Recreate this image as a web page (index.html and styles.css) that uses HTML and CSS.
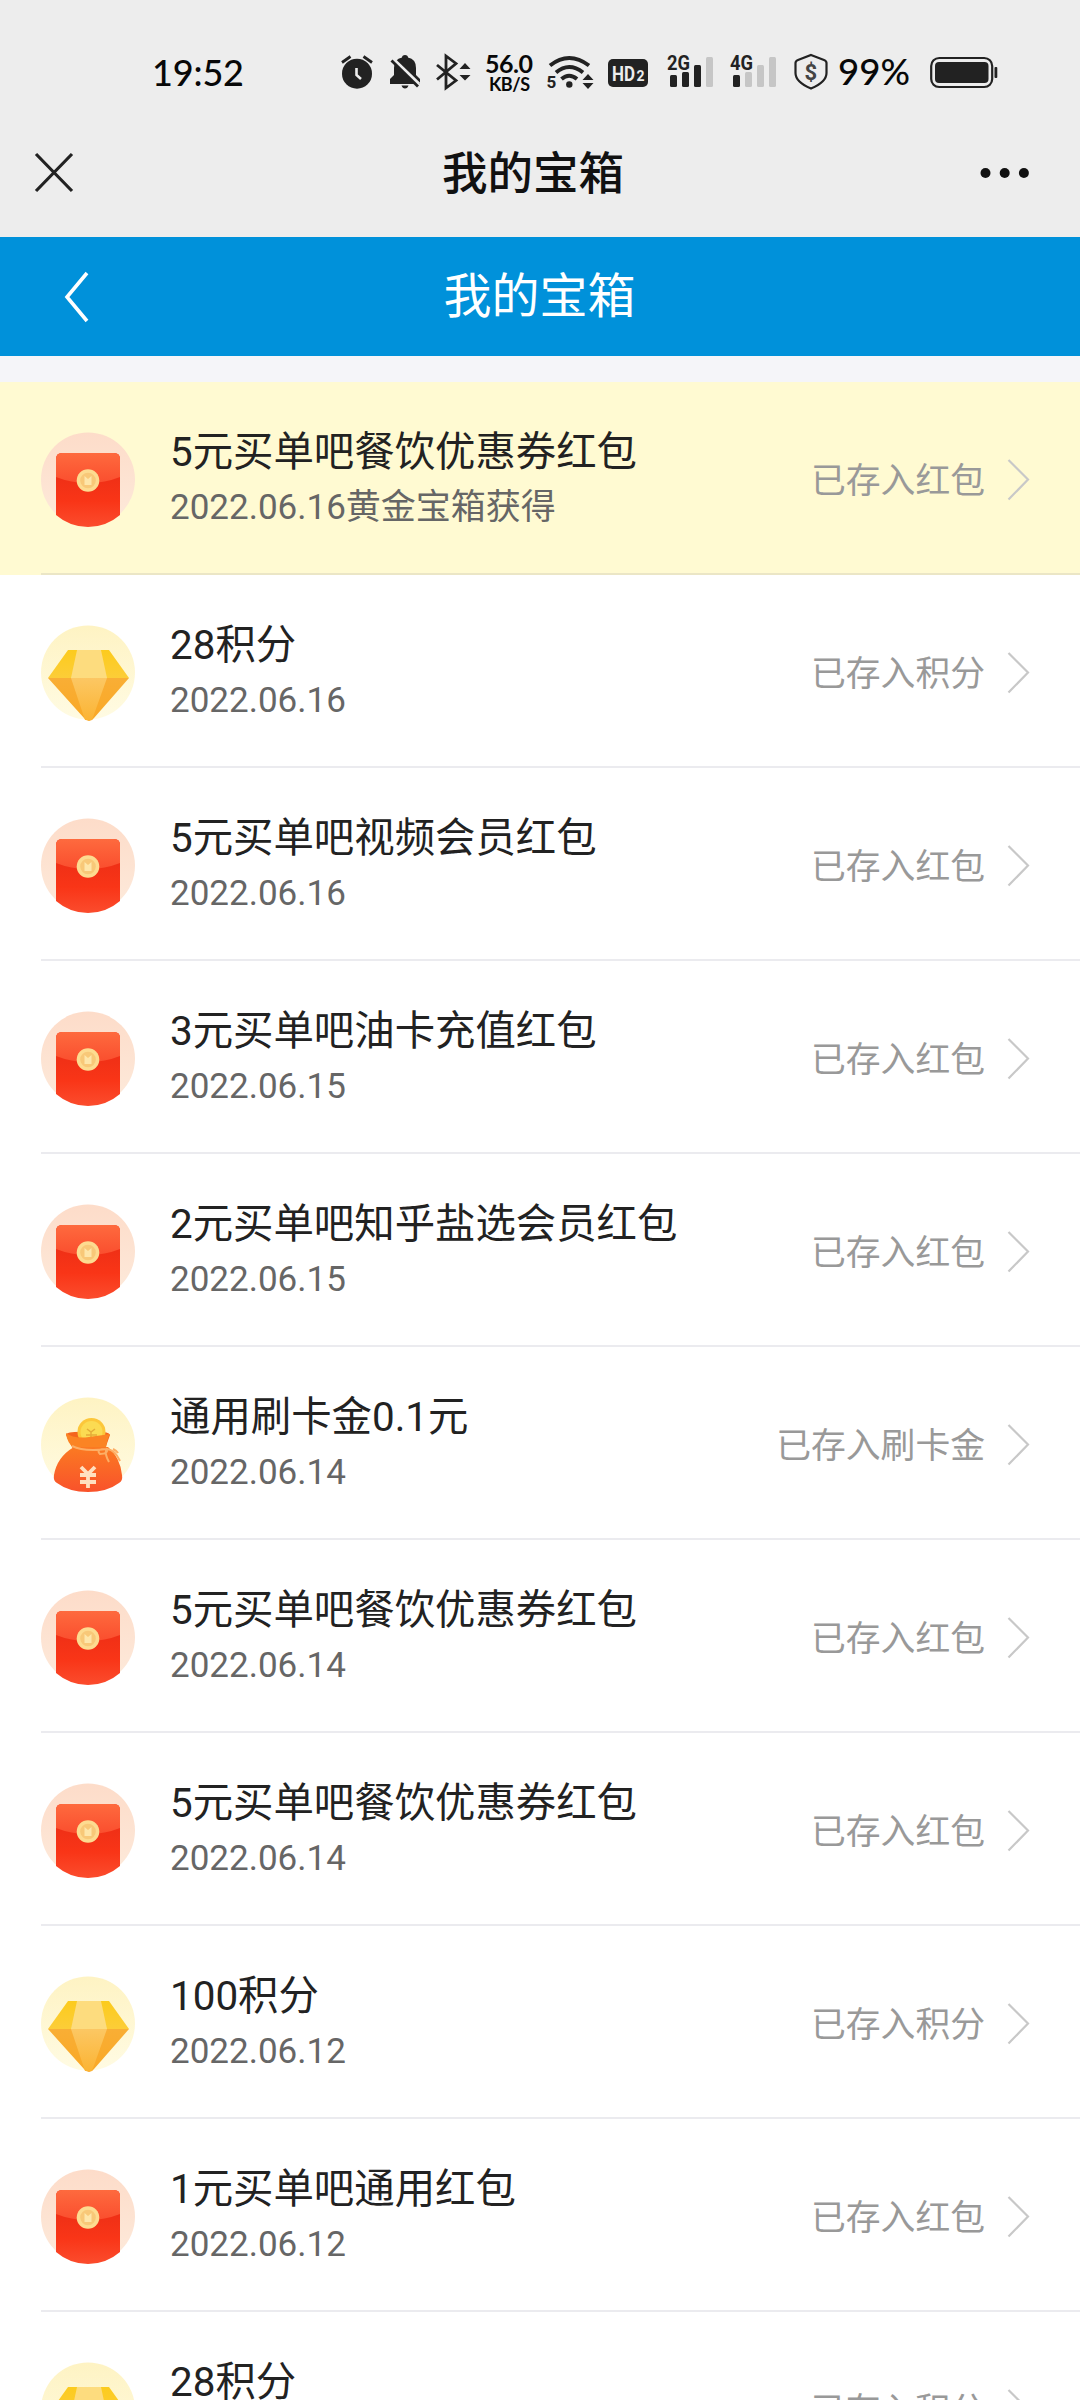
FILE: index.html
```html
<!DOCTYPE html>
<html lang="zh-CN">
<head>
<meta charset="utf-8">
<title>我的宝箱</title>
<link rel="stylesheet" href="styles.css">
</head>
<body>
<svg class="defs" aria-hidden="true">
  <defs>
    <linearGradient id="flap" x1="0" y1="0" x2="0" y2="1"><stop offset="0" stop-color="#fe6a3e"/><stop offset="1" stop-color="#fa4e2e"/></linearGradient>
    <linearGradient id="packet" x1="0" y1="0" x2="0" y2="1"><stop offset=".35" stop-color="#f03016"/><stop offset=".65" stop-color="#f93517"/><stop offset="1" stop-color="#fb4c2d"/></linearGradient>
    <linearGradient id="peach" x1="0" y1="0" x2="0" y2="1"><stop offset="0" stop-color="#fddcc9"/><stop offset="1" stop-color="#fdeadb"/></linearGradient>
    <linearGradient id="cream" x1="0" y1="0" x2="0" y2="1"><stop offset="0" stop-color="#fef3c3"/><stop offset="1" stop-color="#fffbe3"/></linearGradient>
    <linearGradient id="gemTop" x1="0" y1="0" x2="0" y2="1"><stop offset="0" stop-color="#fccb1d"/><stop offset="1" stop-color="#fccd38"/></linearGradient>
    <linearGradient id="gemLow" x1="0" y1="0" x2="0" y2="1"><stop offset="0" stop-color="#f9ae35"/><stop offset="1" stop-color="#f9a825"/></linearGradient>
    <linearGradient id="gemMid" x1="0" y1="0" x2="0" y2="1"><stop offset="0" stop-color="#fcc763"/><stop offset="1" stop-color="#fbb434"/></linearGradient>
    <linearGradient id="bag" x1="0" y1="0" x2="0" y2="1"><stop offset="0" stop-color="#fb7a22"/><stop offset="1" stop-color="#f9522b"/></linearGradient>
    <symbol id="i-packet" viewBox="0 0 96 96">
      <circle cx="47" cy="47.500" r="47" fill="url(#peach)"/>
      <path d="M15 27q0-6 6-6h52q6 0 6 6v56Q65 95 47 95T15 83z" fill="url(#packet)"/>
      <path d="M15 27q0-6 6-6h52q6 0 6 6v18Q64 51 47 51T15 45z" fill="url(#flap)"/>
      <circle cx="47" cy="48.500" r="11.300" fill="#fddb90"/>
      <circle cx="47" cy="48.500" r="7.800" fill="#f8c878"/>
      <path d="M43.500 44l3.500 3 3.500-3v9h-7z" fill="#fee6aa"/>
    </symbol>
    <symbol id="i-gem" viewBox="0 0 96 96">
      <circle cx="47" cy="47.500" r="47" fill="url(#cream)"/>
      <path d="M27 25h41l20 28H7z" fill="url(#gemTop)"/>
      <path d="M7 53h81L53 93q-2 3-5 3t-5-3z" fill="url(#gemLow)"/>
      <path d="M36 25h24l6 28H30z" fill="#fddc7e"/>
      <path d="M30 53h36L51 95h-7z" fill="url(#gemMid)"/>
    </symbol>
    <symbol id="i-bag" viewBox="0 0 96 96">
      <circle cx="47" cy="47.500" r="47" fill="url(#cream)"/>
      <path d="M25 38q0-4 24-3 19-1 20 3l-5 14H32z" fill="#f4651e"/>
      <circle cx="50.500" cy="35" r="14" fill="#fcc73a"/>
      <circle cx="50.500" cy="35" r="11" fill="#fbdb52"/>
      <path d="M46 32l4 3 4-3M50 35v9M45 38h11" fill="none" stroke="#e5ad38" stroke-width="1.500"/>
      <path d="M25 36q8 6 23 4t21-3q-3 5-4 14H33q-7-5-8-15z" fill="#fb8423"/>
      <path d="M33 50h34q12 10 14 28 1 6-3 8-12 9-31 9t-31-9q-4-2-3-8 3-18 20-28z" fill="url(#bag)"/>
      <path d="M31 49q12 6 35 3M66 52q-12 0-7 5 8 0 7-5 8 1 13 12M65 53q-1 5 3 12M72 52q4 2 5 4" fill="none" stroke="#fdae65" stroke-width="2"/>
      <path d="M40 70l7 7 7-7M47 77v14M39 78h16M39 85h16" fill="none" stroke="#ffe0c0" stroke-width="3.800"/>
    </symbol>
    <symbol id="i-more" viewBox="0 0 24 44"><path d="M1.500 2L21 21.500 1.500 41.500" fill="none" stroke="#c8c8c8" stroke-width="2.200"/></symbol>
  </defs>
</svg>

<div class="status-bar">
  <svg class="time" width="94" height="50" viewBox="151 50 94 50"><text x="152" y="86" textLength="92">19:52</text></svg>
  <svg class="alarm" width="36" height="50" viewBox="339 50 36 50"><circle cx="357" cy="73.700" r="15"/><path d="M342 62.500l8.500-6M363.500 56.500l8.500 6" class="line w3"/><path d="M356.500 68v7l4.500 4" fill="none" stroke="#ededed" stroke-width="2.600"/></svg>
  <svg class="bell" width="32" height="50" viewBox="389 50 32 50"><path d="M390 84v-5l4-4v-7q0-9 8-10.500 0-2.500 3-2.500t3 2.500q8 1.500 8 10.500v7l4 4v5zM401.500 85.500h7q-1 3-3.500 3t-3.500-3z"/><path d="M390 56.500l29 28" stroke="#ededed" stroke-width="4" fill="none"/><path d="M391.500 60.500l26.500 26" class="line w3"/></svg>
  <svg class="bt" width="36" height="50" viewBox="435 50 36 50"><path d="M437 65l19 15.500-10 7.500V56l10 7.500-19 16" class="line w3"/><path d="M459.500 69l5.500-6 5.500 6zM459.500 75h11l-5.500 5.500z"/></svg>
  <svg class="speed" width="52" height="50" viewBox="483 50 52 50"><text class="rate" x="485" y="72.500" textLength="48">56.0</text><text class="unit" x="489" y="90.500" textLength="41">KB/S</text></svg>
  <svg class="wifi" width="50" height="50" viewBox="545 50 50 50"><path d="M550 65.500q19-15 39 0M556 72.500q13-11 27 0M561.500 79q7.500-6.500 15.500 0" class="line w4"/><circle cx="569.300" cy="84.500" r="3.200"/><text class="tiny" x="546.500" y="88" textLength="9">5</text><path d="M582.500 80l5.500-6 5.500 6zM582.500 83h11l-5.500 6z"/></svg>
  <svg class="hd" width="42" height="50" viewBox="607 50 42 50"><rect x="608" y="59" width="40" height="28" rx="5"/><text class="hd-text" x="612" y="81" textLength="23" lengthAdjust="spacingAndGlyphs">HD</text><text class="hd-sub" x="636.500" y="81" textLength="9">2</text></svg>
  <svg class="sim" width="50" height="50" viewBox="666 50 50 50"><text class="net" x="667" y="70" textLength="23" lengthAdjust="spacingAndGlyphs">2G</text><rect x="670" y="75" width="7" height="12" rx="1.500"/><rect x="682" y="72" width="7" height="15" rx="1.500"/><rect x="694" y="65" width="7" height="22" rx="1.500"/><rect class="off" x="706" y="57" width="7" height="30" rx="1.500"/></svg>
  <svg class="sim2" width="50" height="50" viewBox="729 50 50 50"><text class="net" x="730" y="70" textLength="23" lengthAdjust="spacingAndGlyphs">4G</text><rect x="733" y="75" width="7" height="12" rx="1.500"/><rect class="off" x="745" y="72" width="7" height="15" rx="1.500"/><rect class="off" x="757" y="65" width="7" height="22" rx="1.500"/><rect class="off" x="769" y="57" width="7" height="30" rx="1.500"/></svg>
  <svg class="shield" width="36" height="50" viewBox="793 50 36 50"><path d="M811 55l13 5q2.500 1 2.500 3v10q0 9-15.500 15.500Q795.500 82 795.500 73V63q0-2 2.500-3z" class="line w2"/><text class="dollar" x="804.500" y="79.500" textLength="13">$</text></svg>
  <svg class="percent" width="74" height="50" viewBox="837 50 74 50"><text x="838" y="84.500" textLength="72" lengthAdjust="spacingAndGlyphs">99%</text></svg>
  <svg class="battery" width="70" height="50" viewBox="929 50 70 50"><rect x="931.200" y="58" width="61" height="29" rx="8" class="line w2"/><rect x="935" y="62" width="53.500" height="21" rx="4"/><rect x="994.500" y="67" width="2.800" height="11" rx="1"/></svg>
</div>

<div class="nav">
  <svg class="close" width="40" height="42" viewBox="0 0 40 42"><path d="M2 2l36 37M38 2L2 39"/></svg>
  <h1>我的宝箱</h1>
  <svg class="dots" width="52" height="12" viewBox="0 0 52 12"><circle cx="6.500" cy="6" r="5"/><circle cx="25.700" cy="6" r="5"/><circle cx="44.900" cy="6" r="5"/></svg>
</div>

<div class="header">
  <svg class="back" width="26" height="52" viewBox="0 0 26 52"><path d="M23 2L3 26l20 24"/></svg>
  <h2>我的宝箱</h2>
</div>

<ul class="list">
  <li class="item new"><svg class="icon"><use href="#i-packet"/></svg><div class="body"><div class="text"><p class="name">5元买单吧餐饮优惠券红包</p><p class="date">2022.06.16黄金宝箱获得</p></div><span class="state">已存入红包</span><svg class="more"><use href="#i-more"/></svg></div></li>
  <li class="item"><svg class="icon"><use href="#i-gem"/></svg><div class="body"><div class="text"><p class="name">28积分</p><p class="date">2022.06.16</p></div><span class="state">已存入积分</span><svg class="more"><use href="#i-more"/></svg></div></li>
  <li class="item"><svg class="icon"><use href="#i-packet"/></svg><div class="body"><div class="text"><p class="name">5元买单吧视频会员红包</p><p class="date">2022.06.16</p></div><span class="state">已存入红包</span><svg class="more"><use href="#i-more"/></svg></div></li>
  <li class="item"><svg class="icon"><use href="#i-packet"/></svg><div class="body"><div class="text"><p class="name">3元买单吧油卡充值红包</p><p class="date">2022.06.15</p></div><span class="state">已存入红包</span><svg class="more"><use href="#i-more"/></svg></div></li>
  <li class="item"><svg class="icon"><use href="#i-packet"/></svg><div class="body"><div class="text"><p class="name">2元买单吧知乎盐选会员红包</p><p class="date">2022.06.15</p></div><span class="state">已存入红包</span><svg class="more"><use href="#i-more"/></svg></div></li>
  <li class="item"><svg class="icon"><use href="#i-bag"/></svg><div class="body"><div class="text"><p class="name">通用刷卡金0.1元</p><p class="date">2022.06.14</p></div><span class="state">已存入刷卡金</span><svg class="more"><use href="#i-more"/></svg></div></li>
  <li class="item"><svg class="icon"><use href="#i-packet"/></svg><div class="body"><div class="text"><p class="name">5元买单吧餐饮优惠券红包</p><p class="date">2022.06.14</p></div><span class="state">已存入红包</span><svg class="more"><use href="#i-more"/></svg></div></li>
  <li class="item"><svg class="icon"><use href="#i-packet"/></svg><div class="body"><div class="text"><p class="name">5元买单吧餐饮优惠券红包</p><p class="date">2022.06.14</p></div><span class="state">已存入红包</span><svg class="more"><use href="#i-more"/></svg></div></li>
  <li class="item"><svg class="icon"><use href="#i-gem"/></svg><div class="body"><div class="text"><p class="name">100积分</p><p class="date">2022.06.12</p></div><span class="state">已存入积分</span><svg class="more"><use href="#i-more"/></svg></div></li>
  <li class="item"><svg class="icon"><use href="#i-packet"/></svg><div class="body"><div class="text"><p class="name">1元买单吧通用红包</p><p class="date">2022.06.12</p></div><span class="state">已存入红包</span><svg class="more"><use href="#i-more"/></svg></div></li>
  <li class="item"><svg class="icon"><use href="#i-gem"/></svg><div class="body"><div class="text"><p class="name">28积分</p><p class="date">2022.06.12</p></div><span class="state">已存入积分</span><svg class="more"><use href="#i-more"/></svg></div></li>
</ul>
</body>
</html>
```
FILE: styles.css
```css
* { box-sizing: border-box; margin: 0; padding: 0; }
html, body { height: 2400px; overflow: hidden; }
body { width: 1080px; background: #f5f5f9; font-family: Roboto, "Noto Sans CJK SC", sans-serif; }
svg { display: block; flex: none; overflow: visible; }
.defs { position: absolute; width: 0; height: 0; }

.status-bar { display: flex; height: 108px; padding: 50px 0 0 151px; background: #ededed; fill: #222; }
.status-bar text { font-family: Lato, sans-serif; fill: #080808; }
.time text { font-size: 36px; font-weight: 500; }
.percent text { font-size: 36px; font-weight: 500; }
.status-bar .rate { font-size: 25px; font-weight: 700; }
.status-bar .unit { font-size: 18px; font-weight: 700; }
.status-bar .tiny { font: 700 17px Roboto, sans-serif; fill: #222; }
.status-bar .net { font: 700 21px Roboto, sans-serif; fill: #222; }
.status-bar .hd-text { font: 700 20px Roboto, sans-serif; fill: #ededed; }
.status-bar .hd-sub { font: 700 14px Roboto, sans-serif; fill: #ededed; }
.status-bar .dollar { font: 700 22px Roboto, sans-serif; fill: #444; }
.line { fill: none; stroke: #222; }
.w2 { stroke-width: 2.2; }
.w3 { stroke-width: 2.8; }
.w4 { stroke-width: 4; }
.off { fill: #c6c6c6; }
.alarm { margin-left: 94px; }
.bell { margin-left: 14px; }
.bt { margin-left: 14px; }
.speed { margin-left: 12px; }
.wifi { margin-left: 10px; }
.hd { margin-left: 12px; }
.sim { margin-left: 17px; }
.sim2 { margin-left: 13px; }
.shield { margin-left: 14px; }
.percent { margin-left: 8px; }
.battery { margin-left: 18px; }

.nav { display: flex; align-items: center; height: 129px; padding: 0 50px 0 34px; background: #ededed; }
.close path { fill: none; stroke: #222; stroke-width: 3.2; }
.nav h1 { flex: 1; padding: 5px 0 0 13px; text-align: center; font-size: 45.5px; font-weight: 500; line-height: 60px; color: #111; }
.dots { fill: #111; margin-right: -1px; }

.header { display: flex; align-items: center; height: 119px; padding: 0 91px 0 64px; background: #0091da; }
.back path { fill: none; stroke: #fff; stroke-width: 3.6; }
.header h2 { flex: 1; text-align: center; font-size: 48px; font-weight: 400; line-height: 60px; color: #fff; }

.list { margin-top: 26px; list-style: none; background: #fff; }
.item { display: flex; align-items: center; height: 193px; padding: 3px 0 0 41px; }
.new { background: #fffad2; }
.icon { width: 96px; height: 96px; }
.body { display: flex; flex: 1; align-items: center; align-self: stretch; margin-left: 33px; padding-right: 49px; position: relative; }
.body::after { content: ""; position: absolute; left: -129px; right: 0; bottom: 0; height: 2px; background: rgba(60, 60, 100, .1); }
.text { flex: 1; }
.name { font-size: 40.4px; line-height: 55px; color: #222; white-space: nowrap; }
.date { font-size: 35px; line-height: 55px; color: #666; white-space: nowrap; }
.state { padding-top: 1px; font-size: 34.8px; line-height: 54px; color: #999; white-space: nowrap; }
.more { width: 24px; height: 44px; margin-left: 22px; }
```
